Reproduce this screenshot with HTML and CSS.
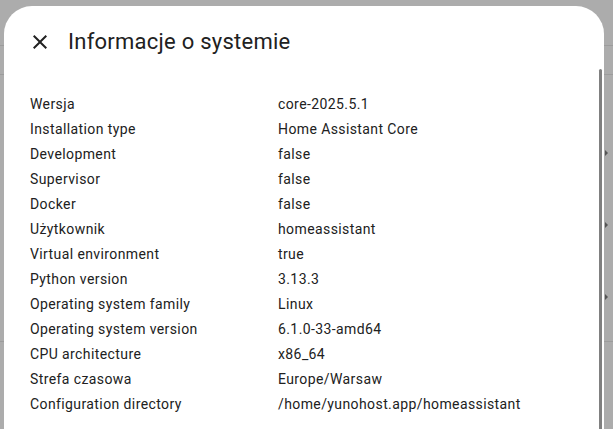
FILE: index.html
```html
<!DOCTYPE html>
<html lang="pl">
<head>
    <meta charset="UTF-8">
    <meta name="viewport" content="width=device-width, initial-scale=1.0">
    <title>Informacje o systemie</title>
    <link rel="stylesheet" href="styles.css">
</head>
<body>
    <div class="page">
        <div class="page-header"></div>
        <div class="page-toolbar"></div>
        <div class="page-list">
            <div class="page-row"><span class="chevron"></span></div>
            <div class="page-row"><span class="chevron"></span></div>
            <div class="page-row"><span class="chevron"></span></div>
            <div class="page-row last"></div>
        </div>
    </div>

    <div class="dialog">
        <div class="dialog-header">
            <button class="close-btn" type="button" aria-label="Zamknij">
                <svg viewBox="0 0 24 24" width="24" height="24">
                    <path d="M19,6.41L17.59,5L12,10.59L6.41,5L5,6.41L10.59,12L5,17.59L6.41,19L12,13.41L17.59,19L19,17.59L13.41,12L19,6.41Z"/>
                </svg>
            </button>
            <h2 class="dialog-title">Informacje o systemie</h2>
        </div>

        <div class="dialog-content">
            <table class="info-table">
                <tr><td>Wersja</td><td>core-2025.5.1</td></tr>
                <tr><td>Installation type</td><td>Home Assistant Core</td></tr>
                <tr><td>Development</td><td>false</td></tr>
                <tr><td>Supervisor</td><td>false</td></tr>
                <tr><td>Docker</td><td>false</td></tr>
                <tr><td>Użytkownik</td><td>homeassistant</td></tr>
                <tr><td>Virtual environment</td><td>true</td></tr>
                <tr><td>Python version</td><td>3.13.3</td></tr>
                <tr><td>Operating system family</td><td>Linux</td></tr>
                <tr><td>Operating system version</td><td>6.1.0-33-amd64</td></tr>
                <tr><td>CPU architecture</td><td>x86_64</td></tr>
                <tr><td>Strefa czasowa</td><td>Europe/Warsaw</td></tr>
                <tr><td>Configuration directory</td><td>/home/yunohost.app/homeassistant</td></tr>
            </table>
        </div>

        <div class="scrollbar"></div>
    </div>
</body>
</html>
```

FILE: styles.css
```css
html, body {
    margin: 0;
    padding: 0;
    height: 100%;
    overflow: hidden;
}
body {
    font-family: Roboto, 'Noto Sans', sans-serif;
    background-color: #acacac;
    color: #212121;
}

/* dimmed page behind the dialog */
.page {
    display: flex;
    flex-direction: column;
}
.page-header {
    height: 45px;
    border-bottom: 1px solid #9c9c9c;
}
.page-toolbar {
    height: 28px;
    border-bottom: 1px solid #9c9c9c;
}
.page-list {
    padding-top: 42px;
}
.page-row {
    height: 72px;
    display: flex;
    align-items: center;
    justify-content: flex-end;
    padding-right: 5px;
}
.page-row.last {
    height: 8px;
    border-bottom: 1px solid #9c9c9c;
}
.chevron {
    width: 0;
    height: 0;
    border-top: 3px solid transparent;
    border-bottom: 3px solid transparent;
    border-left: 3px solid #555;
}

/* dialog */
.dialog {
    position: absolute;
    top: 6px;
    left: 4px;
    width: 600px;
    height: 460px;
    background-color: #fff;
    border-radius: 28px 28px 0 0;
    box-sizing: border-box;
}
.dialog-header {
    display: flex;
    align-items: center;
    padding: 24px 24px 0 20px;
    height: 24px;
    box-sizing: content-box;
}
.close-btn {
    width: 32px;
    height: 32px;
    padding: 4px;
    margin: 0;
    border: none;
    background: none;
    fill: #212121;
    display: flex;
    align-items: center;
    justify-content: center;
    box-sizing: border-box;
}
.dialog-title {
    margin: 0 0 0 12px;
    font-size: 22px;
    font-weight: 400;
    line-height: 28px;
    letter-spacing: 0.25px;
    color: #212121;
}
.dialog-content {
    padding: 38px 26px 0 26px;
}
.info-table {
    border-collapse: collapse;
    font-size: 14px;
    letter-spacing: 0.4px;
}
.info-table td {
    padding: 0;
    height: 25px;
    line-height: 25px;
    white-space: nowrap;
}
.info-table td:first-child {
    width: 248px;
}
.scrollbar {
    position: absolute;
    top: 63px;
    left: 595px;
    width: 3px;
    height: 400px;
    border-radius: 2px;
    background-color: #808080;
}
```
